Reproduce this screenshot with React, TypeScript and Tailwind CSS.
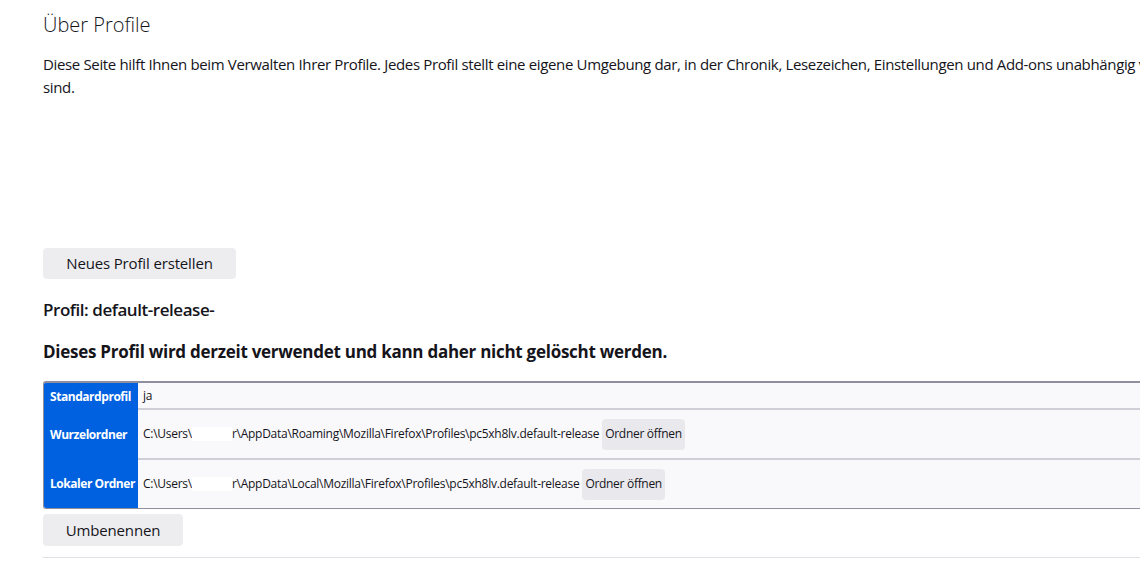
import React from 'react';

const font = { fontFamily: '"Open Sans", "Noto Sans", sans-serif' };

const Mask = () => <span className="inline-block w-[40px] h-[14px] bg-white align-middle" />;

const OpenButton = () => (
  <button className="ml-[3px] h-[31px] px-[3px] rounded-[4px] bg-[#e9e9ed] text-[12px] tracking-[-0.3px] text-[#15141a]">
    Ordner öffnen
  </button>
);

const rows = [
  { label: 'Standardprofil', value: <span>ja</span>, h: 'h-[27px] border-b-2' },
  {
    label: 'Wurzelordner',
    value: (
      <>
        <span>C:\Users\</span>
        <Mask />
        <span>r\AppData\Roaming\Mozilla\Firefox\Profiles\pc5xh8lv.default-release</span>
        <OpenButton />
      </>
    ),
    h: 'h-[50px] border-b-2',
  },
  {
    label: 'Lokaler Ordner',
    value: (
      <>
        <span>C:\Users\</span>
        <Mask />
        <span>r\AppData\Local\Mozilla\Firefox\Profiles\pc5xh8lv.default-release</span>
        <OpenButton />
      </>
    ),
    h: 'h-[48px]',
  },
];

export default function App() {
  return (
    <div className="w-[1140px] h-[574px] overflow-hidden bg-white text-[#15141a]" style={font}>
      <div className="w-[1400px] pl-[43px] pt-[10px]">
        <h1 className="text-[20px] font-light leading-[30px]">Über Profile</h1>
        <p className="mt-[13px] text-[15px] leading-[23px] tracking-[-0.35px] whitespace-nowrap">
          Diese Seite hilft Ihnen beim Verwalten Ihrer Profile. Jedes Profil stellt eine eigene Umgebung dar, in der Chronik, Lesezeichen, Einstellungen und Add-ons unabhängig voneinander gespeichert
          <br />
          sind.
        </p>

        <div className="mt-[149px]">
          <button className="h-[31px] w-[193px] rounded-[4px] bg-[#ededf0] text-[15px] tracking-[-0.15px]">
            Neues Profil erstellen
          </button>
        </div>

        <h2 className="mt-[19px] text-[17px] font-semibold leading-[24px] tracking-[-0.45px]">Profil: default-release-</h2>
        <h3 className="mt-[18px] text-[17px] font-bold leading-[24px] tracking-[-0.27px]">
          Dieses Profil wird derzeit verwendet und kann daher nicht gelöscht werden.
        </h3>

        <div className="mt-[17px] border border-[#8f8f9d] border-t-2 rounded-tl-[3px] rounded-bl-[3px] overflow-hidden">
          {rows.map((r) => (
            <div key={r.label} className="flex">
              <div className="w-[94px] shrink-0 bg-[#0061e0] text-white text-[12px] font-bold tracking-[-0.45px] whitespace-nowrap flex items-center pl-[6px]">
                {r.label}
              </div>
              <div
                className={`flex-1 bg-[#f9f9fb] border-[#cfcfd8] text-[12px] tracking-[-0.27px] whitespace-nowrap flex items-center pl-[5px] ${r.h}`}
              >
                {r.value}
              </div>
            </div>
          ))}
        </div>

        <div className="mt-[5px]">
          <button className="h-[32px] w-[140px] rounded-[4px] bg-[#ededf0] text-[15px] tracking-[-0.15px]">Umbenennen</button>
        </div>

        <hr className="mt-[11px] border-0 border-t border-[#e0e0e6]" />
      </div>
    </div>
  );
}
